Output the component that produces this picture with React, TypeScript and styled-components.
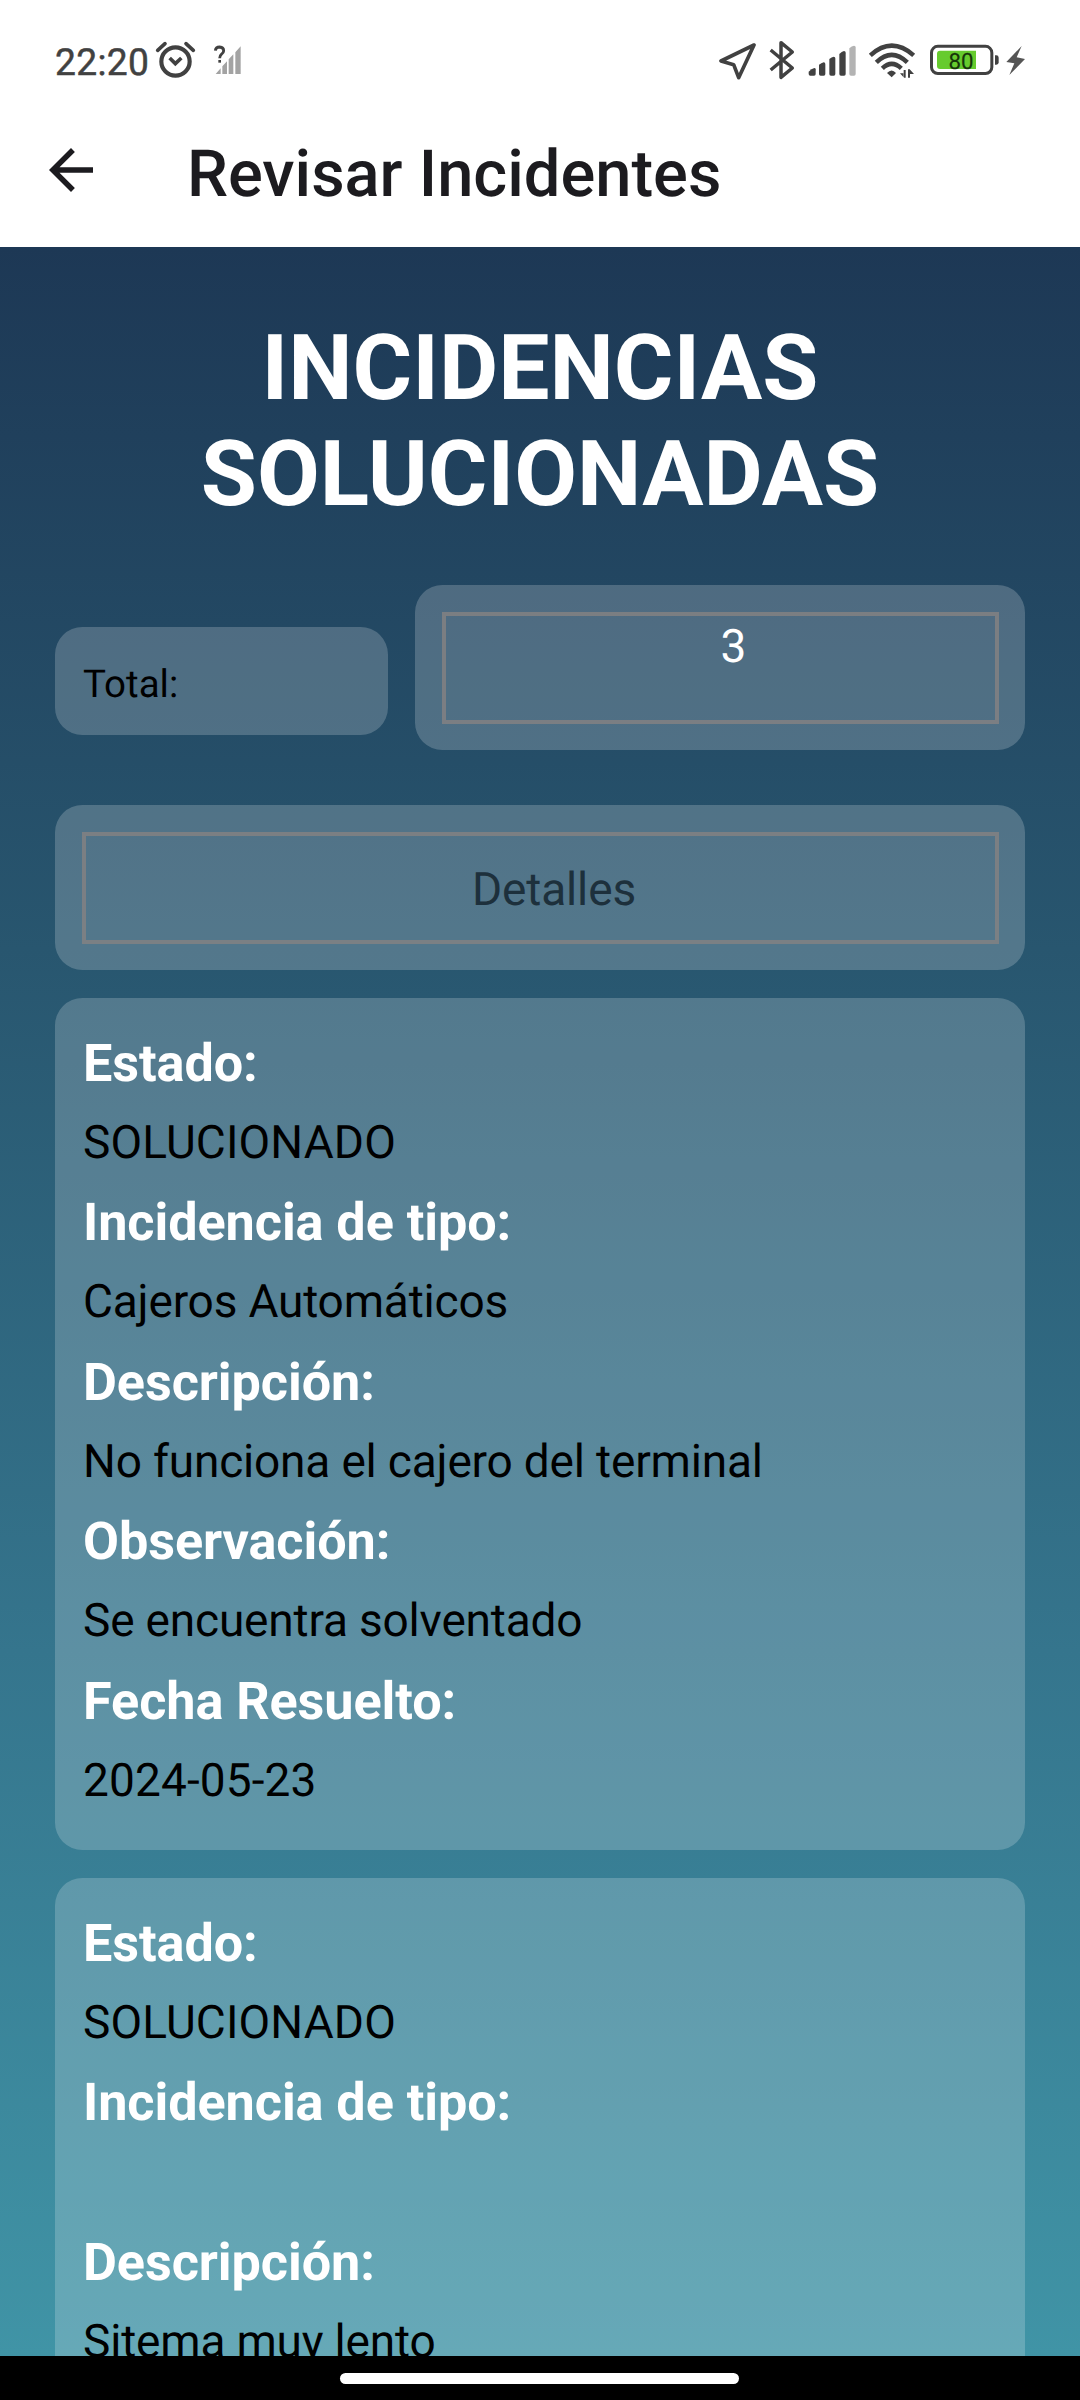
import React from "react";
import styled, { createGlobalStyle } from "styled-components";

const GlobalStyle = createGlobalStyle`
  html, body { margin: 0; padding: 0; background: #000; }
  * { box-sizing: border-box; }
`;

const Screen = styled.div`
  width: 1080px;
  height: 2400px;
  display: flex;
  flex-direction: column;
  overflow: hidden;
  font-family: Roboto, "Noto Sans", sans-serif;
  text-rendering: geometricPrecision;
  color: #000;
`;

const StatusBar = styled.div`
  height: 110px;
  flex: none;
  background: #fff;
  display: flex;
  justify-content: space-between;
  padding: 40px 54px 0 55px;
`;

const StatusGroup = styled.div`
  display: flex;
  align-items: flex-start;
  height: 40px;
`;

const Clock = styled.span`
  font-size: 37.2px;
  line-height: 46px;
  width: 100px;
  color: #414141;
  letter-spacing: 0.3px;
  -webkit-text-stroke: 0.5px #414141;
`;

const Glyph = styled.svg<{ $width: number; $gap?: number }>`
  display: block;
  flex: none;
  width: ${(p) => p.$width}px;
  height: 40px;
  margin-left: ${(p) => p.$gap ?? 0}px;
`;

const AppBar = styled.header`
  height: 137px;
  flex: none;
  background: #fff;
  display: flex;
  align-items: flex-start;
  padding: 27px 38px 0;
`;

const BackButton = styled.button`
  border: 0;
  padding: 0;
  background: none;
  width: 66px;
  height: 66px;
  color: #1c1b1f;
  svg { display: block; width: 66px; height: 66px; }
`;

const AppTitle = styled.h1`
  margin: 0 0 0 83px;
  font-size: 65px;
  font-weight: 500;
  line-height: 75px;
  color: #1c1b1f;
  white-space: nowrap;
`;

const Body = styled.main`
  flex: 1;
  min-height: 0;
  overflow: hidden;
  display: flex;
  flex-direction: column;
  padding: 69px 55px 0;
  background: linear-gradient(180deg, #1d3855 0%, #28566f 33.3%, #35758d 66.6%, #4094a6 100%);
`;

const Heading = styled.h2`
  margin: 0;
  text-align: center;
  font-size: 91.2px;
  line-height: 106px;
  font-weight: 700;
  color: #fff;
`;

const TotalRow = styled.div`
  display: flex;
  align-items: center;
  gap: 27px;
  margin-top: 57px;
`;

const Panel = styled.div`
  flex: none;
  background: rgba(255, 255, 255, 0.2);
  border-radius: 27.5px;
`;

const TotalLabel = styled(Panel)`
  width: 333px;
  height: 108px;
  margin-top: 27px;
  padding: 36px 28px 0;
  font-size: 38.5px;
  line-height: 44px;
`;

const FieldPanel = styled(Panel)`
  flex: 1;
  height: 165px;
  padding: 27px 26px 26px 27px;
  display: flex;
`;

const Outline = styled.div`
  flex: 1;
  height: 112px;
  border: 4px solid rgba(131, 129, 130, 0.85);
  text-align: center;
  font-size: 46px;
  line-height: 54px;
`;

const TotalValue = styled(Outline)`
  color: #fff;
  padding: 4px 0 0 26px;
`;

const DetailsTitle = styled(Outline)`
  color: #1d303c;
  padding: 27px 0 0 27px;
  letter-spacing: -0.15px;
`;

const DetailsRow = styled.div`
  display: flex;
  margin-top: 55px;
`;

const IncidentList = styled.div`
  display: flex;
  flex-direction: column;
  gap: 28px;
  margin-top: 28px;
`;

const IncidentCard = styled(Panel)`
  height: 852px;
  padding: 27.5px 28px;
`;

const FieldName = styled.div`
  height: 76px;
  font-size: 52.2px;
  line-height: 76px;
  font-weight: 700;
  letter-spacing: -0.08px;
  color: #fff;
`;

const FieldText = styled.div<{ $tracking: number }>`
  height: 83.5px;
  font-size: 46px;
  line-height: 83px;
  letter-spacing: ${(p) => p.$tracking}px;
  white-space: nowrap;
`;

const NavigationBar = styled.div`
  height: 44px;
  flex: none;
  background: #000;
  display: flex;
  justify-content: center;
  padding-top: 17px;
`;

const HomeHandle = styled.div`
  width: 399px;
  height: 11px;
  margin-right: 1px;
  border-radius: 5.5px;
  background: #fff;
`;

type Field = { name: string; text: string };

const incidents: Field[][] = [
  [
    { name: "Estado:", text: "SOLUCIONADO" },
    { name: "Incidencia de tipo:", text: "Cajeros Automáticos" },
    { name: "Descripción:", text: "No funciona el cajero del terminal" },
    { name: "Observación:", text: "Se encuentra solventado" },
    { name: "Fecha Resuelto:", text: "2024-05-23" },
  ],
  [
    { name: "Estado:", text: "SOLUCIONADO" },
    { name: "Incidencia de tipo:", text: "" },
    { name: "Descripción:", text: "Sitema muy lento" },
  ],
];

// Lowercase text is set a little tighter than capitals and digits.
const trackingFor = (text: string) => (/[a-z]/.test(text) ? -0.18 : 0.13);

const INK = "#414141";

const AlarmIcon = () => (
  <Glyph $width={41} viewBox="465 60 123 120" fill="none" stroke={INK} strokeLinecap="round">
    <circle cx="526.5" cy="124.500" r="42.500" strokeWidth="12.500" />
    <path d="M473 91 L495 71 M580 91 L558 71" strokeWidth="11" />
    <path d="M509 114 L526 131 L544 114" strokeWidth="11" strokeLinecap="butt" />
  </Glyph>
);

const UnknownSignalIcon = () => (
  <Glyph $width={30} $gap={17} viewBox="639 60 90 120">
    <path
      d="M647 162L662 145V162ZM667 162V139L681 124V162ZM686 162V118L700 103V162ZM706 162V97L722 79V162Z"
      fill="#a3a3a3"
    />
    <path d="M646 92Q647 81 659 81Q671 82 671 92Q671 98 664 103Q659 107 659 115" fill="none" stroke={INK} strokeWidth="8.500" />
    <path d="M655 120H663V128H655Z" fill={INK} />
  </Glyph>
);

const LocationIcon = () => (
  <Glyph $width={39} viewBox="54 60 117 120" fill="none" stroke={INK} strokeWidth="11" strokeLinejoin="round">
    <path d="M162 75 L63 123 L101 134 L116 173 Z" />
  </Glyph>
);

const BluetoothIcon = () => (
  <Glyph $width={28} $gap={11} viewBox="204 60 84 120" fill="none" stroke={INK} strokeWidth="10.500" strokeLinejoin="round">
    <path d="M212 90 L277 144 L243 172 V68 L277 96 L212 150" />
  </Glyph>
);

const SignalIcon = () => (
  <Glyph $width={50} $gap={11} viewBox="321 60 150 120" fill={INK}>
    <path d="M326 155Q334 146 343 144Q347 144 347 148V162Q347 167 342 167H331Q326 167 326 162Z" />
    <path d="M357 134Q364 129 371 127Q376 127 376 132V162Q376 167 371 167H362Q357 167 357 162Z" />
    <path d="M388 117Q395 111 401 110Q406 110 406 115V162Q406 167 401 167H393Q388 167 388 162Z" />
    <path d="M418 102Q425 94 432 93Q437 93 437 98V162Q437 167 432 167H423Q418 167 418 162Z" />
    <path d="M448 85Q455 78 462 77Q467 77 467 82V162Q467 167 462 167H453Q448 167 448 162Z" fill="#b3b3b3" />
  </Glyph>
);

const WifiIcon = () => (
  <Glyph $width={48} $gap={11} viewBox="504 60 144 120" fill="none" stroke={INK} strokeWidth="13.500">
    <path d="M511 106 Q575 48 641 106" />
    <path d="M529 127 Q575 82 622 127" />
    <path d="M547 145 Q575 118 604 145" />
    <path d="M561 159Q575 144 588 159L575 172Z" fill={INK} stroke="none" />
    <path d="M611 150V173H617V150ZM612 173L600 160H612ZM624 173V148H630V173ZM629 148L642 162H629Z" fill={INK} stroke="none" />
  </Glyph>
);

const BatteryIcon = () => (
  <Glyph $width={71} $gap={13} viewBox="687 60 213 120">
    <rect x="694.500" y="79" width="181" height="81.500" rx="19" fill="none" stroke={INK} strokeWidth="9" />
    <path d="M720 92H828V147H720Q711 147 711 138V101Q711 92 720 92Z" fill="#66cb2e" />
    <path d="M885 106H889Q896 106 896 113V127Q896 134 889 134H885Z" fill={INK} />
    <text x="783" y="145.500" textAnchor="middle" fontSize="67" fontFamily="Roboto, sans-serif" fill="#16350a" stroke="#16350a" strokeWidth="0.500">80</text>
  </Glyph>
);

const ChargingIcon = () => (
  <Glyph $width={21} $gap={5} viewBox="915 60 63 120">
    <path d="M965 78L919 126L943 130L928 165L975 117L950 112Z" fill="#555" />
  </Glyph>
);

export default function App() {
  return (
    <Screen>
      <GlobalStyle />
      <StatusBar>
        <StatusGroup>
          <Clock>22:20</Clock>
          <AlarmIcon />
          <UnknownSignalIcon />
        </StatusGroup>
        <StatusGroup>
          <LocationIcon />
          <BluetoothIcon />
          <SignalIcon />
          <WifiIcon />
          <BatteryIcon />
          <ChargingIcon />
        </StatusGroup>
      </StatusBar>
      <AppBar>
        <BackButton aria-label="Atrás">
          <svg viewBox="0 0 24 24" fill="currentColor">
            <path d="M20 11H7.830l5.590-5.590L12 4l-8 8 8 8 1.410-1.410L7.830 13H20v-2z" />
          </svg>
        </BackButton>
        <AppTitle>Revisar Incidentes</AppTitle>
      </AppBar>
      <Body>
        <Heading>
          INCIDENCIAS
          <br />
          SOLUCIONADAS
        </Heading>
        <TotalRow>
          <TotalLabel>Total:</TotalLabel>
          <FieldPanel>
            <TotalValue>3</TotalValue>
          </FieldPanel>
        </TotalRow>
        <DetailsRow>
          <FieldPanel>
            <DetailsTitle>Detalles</DetailsTitle>
          </FieldPanel>
        </DetailsRow>
        <IncidentList>
          {incidents.map((fields, i) => (
            <IncidentCard key={i}>
              {fields.map((field) => (
                <React.Fragment key={field.name}>
                  <FieldName>{field.name}</FieldName>
                  <FieldText $tracking={trackingFor(field.text)}>{field.text}</FieldText>
                </React.Fragment>
              ))}
            </IncidentCard>
          ))}
        </IncidentList>
      </Body>
      <NavigationBar>
        <HomeHandle />
      </NavigationBar>
    </Screen>
  );
}
